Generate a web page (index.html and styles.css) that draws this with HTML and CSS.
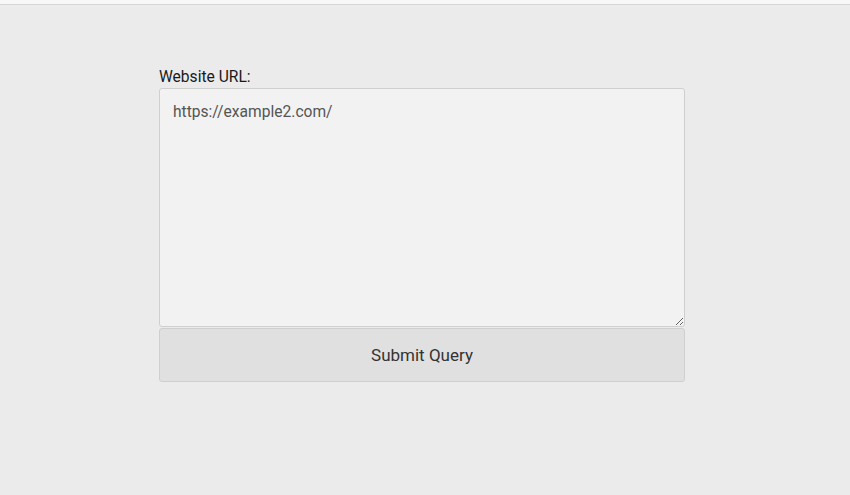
FILE: index.html
```html
<!DOCTYPE html>
<html>
<head>
<meta charset="utf-8">
<link rel="stylesheet" href="styles.css">
</head>
<body>
<div class="topbar"></div>
<main class="page">
  <form class="form">
    <label class="label" for="url">Website URL:</label>
    <textarea id="url" class="input">https://example2.com/</textarea>
    <button type="button" class="submit">Submit Query</button>
  </form>
</main>
</body>
</html>
```
FILE: styles.css
```css
html, body {
  margin: 0;
  padding: 0;
  height: 100%;
}
body {
  background: #ebebeb;
  font-family: Roboto, "Liberation Sans", sans-serif;
  color: #222;
}
.topbar {
  height: 4px;
  background: #f7f7f7;
  border-bottom: 1px solid #d4d4d4;
}
.page {
  padding-top: 62px;
  padding-left: 159px;
}
.form {
  width: 526px;
  display: flex;
  flex-direction: column;
}
.label {
  font-size: 15.6px;
  line-height: 20px;
  color: #1a1a1a;
  margin-bottom: 1px;
}
.input {
  box-sizing: border-box;
  width: 526px;
  height: 239px;
  margin: 0;
  padding: 12px 13px;
  border: 1px solid #cfcfcf;
  border-radius: 3px;
  background: #f2f2f2;
  font-family: Roboto, "Liberation Sans", sans-serif;
  font-size: 15.6px;
  line-height: 22px;
  color: #555;
  resize: both;
  outline: none;
}
.submit {
  box-sizing: border-box;
  width: 526px;
  height: 54px;
  margin-top: 1px;
  padding-bottom: 2px;
  border: 1px solid #cfcfcf;
  border-radius: 3px;
  background: #e0e0e0;
  font-family: Roboto, "Liberation Sans", sans-serif;
  font-size: 17px;
  color: #333;
  cursor: pointer;
}
```
